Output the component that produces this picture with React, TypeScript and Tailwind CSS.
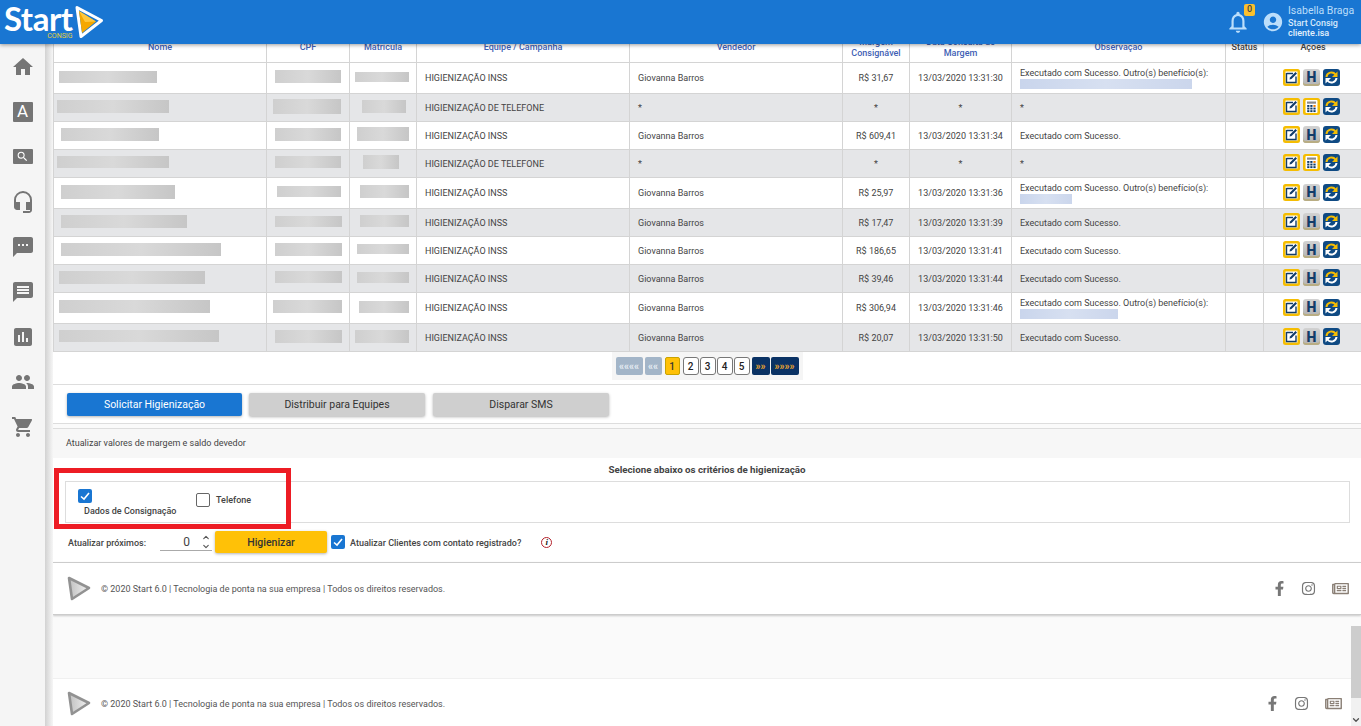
import { ChevronDown, ChevronUp } from 'lucide-react'
import { FaFacebookF, FaInstagram, FaRegNewspaper } from 'react-icons/fa'
import {
  MdAccountCircle,
  MdAssessment,
  MdHeadsetMic,
  MdHome,
  MdMessage,
  MdNotificationsNone,
  MdPeople,
  MdSearch,
  MdShoppingCart,
  MdSms,
} from 'react-icons/md'

const columns = 'grid grid-cols-[213px_83px_67px_213px_213px_67px_102px_214px_38px_98px]'

// blurred cells: [left offset in the cell, width, height]
type Blur = [number, number, number]

type Row = {
  name: Blur
  cpf: Blur
  mat: Blur
  team: string
  seller: string
  margin: string
  date: string
  note: string
  extra?: number
  tall?: boolean
  calc?: boolean
}

const ok = 'Executado com Sucesso.'
const more = 'Executado com Sucesso. Outro(s) benefício(s):'
const inss = 'HIGIENIZAÇÃO INSS'
const tel = 'HIGIENIZAÇÃO DE TELEFONE'
const seller = 'Giovanna Barros'

const rows: Row[] = [
  { name: [6, 98, 12], cpf: [9, 66, 13], mat: [6, 54, 10], team: inss, seller, margin: 'R$ 31,67', date: '13/03/2020 13:31:30', note: more, extra: 172, tall: true },
  { name: [4, 112, 13], cpf: [7, 68, 15], mat: [13, 44, 13], team: tel, seller: '*', margin: '*', date: '*', note: '*', calc: true },
  { name: [8, 98, 13], cpf: [9, 66, 13], mat: [8, 52, 14], team: inss, seller, margin: 'R$ 609,41', date: '13/03/2020 13:31:34', note: ok },
  { name: [4, 112, 12], cpf: [9, 66, 12], mat: [14, 36, 14], team: tel, seller: '*', margin: '*', date: '*', note: '*', calc: true },
  { name: [8, 114, 14], cpf: [11, 64, 11], mat: [11, 49, 13], team: inss, seller, margin: 'R$ 25,97', date: '13/03/2020 13:31:36', note: more, extra: 52, tall: true },
  { name: [8, 126, 13], cpf: [9, 67, 11], mat: [11, 49, 12], team: inss, seller, margin: 'R$ 17,47', date: '13/03/2020 13:31:39', note: ok },
  { name: [8, 160, 13], cpf: [9, 67, 13], mat: [8, 52, 10], team: inss, seller, margin: 'R$ 186,65', date: '13/03/2020 13:31:41', note: ok },
  { name: [6, 146, 13], cpf: [9, 67, 12], mat: [8, 52, 11], team: inss, seller, margin: 'R$ 39,46', date: '13/03/2020 13:31:44', note: ok },
  { name: [6, 151, 13], cpf: [7, 69, 13], mat: [10, 50, 12], team: inss, seller, margin: 'R$ 306,94', date: '13/03/2020 13:31:46', note: more, extra: 98, tall: true },
  { name: [6, 160, 12], cpf: [9, 67, 13], mat: [6, 54, 13], team: inss, seller, margin: 'R$ 20,07', date: '13/03/2020 13:31:50', note: ok },
]

function HeaderLogo() {
  return (
    <svg viewBox="0 0 31 34" className="h-[34px] w-[31px]">
      <path d="M4 2.5 L28.5 15.5 L8 31.5 Z" fill="none" stroke="#fff" strokeWidth="3" strokeLinejoin="round" />
      <path d="M6 6 L23 16.5 L9 28 Z" fill="#f5a800" />
      <path d="M6 6 L23 16.5 L12 17 Z" fill="#ffc83d" />
    </svg>
  )
}

function FooterLogo() {
  return (
    <svg viewBox="0 0 26 27" className="h-[27px] w-[26px]">
      <defs>
        <linearGradient id="footerPlay" x1="0" x2="1" y1="0" y2="0">
          <stop offset="0" stopColor="#c0c0c0" />
          <stop offset="1" stopColor="#f2f2f2" />
        </linearGradient>
      </defs>
      <path d="M3 3 L23 13 L6 24 Z" fill="url(#footerPlay)" stroke="#929292" strokeWidth="2.6" strokeLinejoin="round" />
    </svg>
  )
}

function Check() {
  return (
    <span className="flex h-[14px] w-[14px] shrink-0 items-center justify-center rounded-[2px] bg-[#1976d2]">
      <svg viewBox="0 0 14 14" className="h-[14px] w-[14px]">
        <path d="M3 7.5 L6 10 L11 4" fill="none" stroke="#fff" strokeWidth="1.6" />
      </svg>
    </span>
  )
}

function EditTile() {
  return (
    <svg viewBox="0 0 17 17" className="h-[17px] w-[17px]">
      <rect width="17" height="17" rx="2.5" fill="#f5bd02" />
      <rect x="2.5" y="2.5" width="12" height="12" fill="#fff" />
      <path d="M3.5 4.5 H10 M3.5 4 V13.5 H13 V7.5" fill="none" stroke="#123c69" strokeWidth="1.4" />
      <path d="M6.5 10.5 L7 8.5 L12.5 3 L14 4.5 L8.5 10 Z" fill="#123c69" />
    </svg>
  )
}

function HTile() {
  return (
    <span className="flex h-[17px] w-[17px] items-center justify-center rounded-[3px] bg-gradient-to-b from-[#d2d2d2] to-[#b4b4b4] text-[14px] leading-none font-black text-[#123c69] shadow-[inset_0_-2px_0_#b9ad83]">
      H
    </span>
  )
}

function CalcTile() {
  const cells = [0, 1, 2, 3, 4, 5, 6, 7, 8]
  return (
    <svg viewBox="0 0 17 17" className="h-[17px] w-[17px]">
      <rect width="17" height="17" rx="2.5" fill="#f5bd02" />
      <rect x="2.5" y="2" width="12" height="13" rx="1" fill="#fff" />
      <rect x="4" y="3.5" width="9" height="2.2" fill="#8b8b8b" />
      {cells.map((c) => (
        <rect
          key={c}
          x={4.2 + (c % 3) * 3.1}
          y={7 + Math.floor(c / 3) * 2.6}
          width="2.2"
          height="1.9"
          fill={c === 2 ? '#ef7d00' : '#123c69'}
        />
      ))}
    </svg>
  )
}

function SyncTile() {
  return (
    <svg viewBox="0 0 17 17" className="h-[17px] w-[17px]">
      <rect width="17" height="17" rx="3" fill="#0f4a83" />
      <path d="M3.5 8 A5 5 0 0 1 12.5 5.5" fill="none" stroke="#f5bd02" strokeWidth="2" />
      <path d="M14.5 2.5 V8 H9 Z" fill="#f5bd02" />
      <path d="M13.5 9 A5 5 0 0 1 4.5 11.5" fill="none" stroke="#fff" strokeWidth="2" />
      <path d="M2.5 14.5 V9 H8 Z" fill="#fff" />
    </svg>
  )
}

function Masked({ box }: { box: Blur }) {
  return (
    <div
      className="mb-[3px] bg-gradient-to-r from-[#cfcfcf] via-[#d9d9d9] to-[#c6c6c6] blur-[0.5px]"
      style={{ marginLeft: box[0] - 1, width: box[1], height: box[2] }}
    />
  )
}

function Footer({ right }: { right: string }) {
  return (
    <div className={`flex flex-1 items-center justify-between pl-[13px] ${right}`}>
      <div className="flex items-center gap-[9px]">
        <FooterLogo />
        <span className="pt-[3px] text-[9px] text-[#555]">
          © 2020 Start 6.0 | Tecnologia de ponta na sua empresa | Todos os direitos reservados.
        </span>
      </div>
      <div className="flex items-center text-[#777]">
        <FaFacebookF className="h-[15px] w-[15px]" />
        <FaInstagram className="ml-[14px] h-[15px] w-[15px]" />
        <FaRegNewspaper className="ml-[15px] h-[15px] w-[19px] text-[#8a7f75]" />
      </div>
    </div>
  )
}

const sideIcons = [MdHeadsetMic, MdSms, MdMessage, MdAssessment, MdPeople, MdShoppingCart]

export default function App() {
  return (
    <div className="relative flex h-screen w-screen flex-col overflow-hidden bg-[#fafafa] font-['Roboto',sans-serif] text-[9px] text-[#444]">
      {/* top bar */}
      <header className="relative z-10 flex h-[44px] shrink-0 items-center justify-between bg-[#1976d2] pr-[7px] pl-[4px] shadow-[0_1px_4px_rgba(0,0,0,0.4)]">
        <div className="flex h-full items-start">
          <div className="flex h-full flex-col pt-[3px]">
            <span className="font-['Lato',sans-serif] text-[33px] leading-[30px] font-bold tracking-[-0.5px] whitespace-nowrap text-white">
              Start
            </span>
            <span className="self-end text-[7px] leading-[7px] text-[#e8cf3a]">CONSIG</span>
          </div>
          <div className="mt-[5px] ml-[1px]">
            <HeaderLogo />
          </div>
        </div>
        <div className="flex items-center text-[#bbdefb]">
          <div className="relative">
            <MdNotificationsNone className="h-[26px] w-[26px]" />
            <span className="absolute -top-[5px] right-[-4px] flex h-[12px] w-[11px] items-center justify-center rounded-[2px] bg-[#fbc02d] text-[9px] font-medium text-[#444]">
              0
            </span>
          </div>
          <MdAccountCircle className="ml-[11px] h-[22px] w-[22px]" />
          <div className="ml-[4px] w-[66px] leading-[11px]">
            <p className="text-[10.5px] whitespace-nowrap">Isabella Braga</p>
            <p className="mt-[2px] text-[9px] font-medium whitespace-nowrap text-[#d6e9fb]">Start Consig</p>
            <p className="mt-[-1px] text-[9px] font-medium whitespace-nowrap text-[#e3f0fc]">cliente.isa</p>
          </div>
        </div>
      </header>

      <div className="flex min-h-0 flex-1">
        {/* side menu */}
        <nav className="flex w-[45px] shrink-0 flex-col items-center bg-[#f5f5f5] text-[#757575]">
          <div className="flex h-[45px] items-center">
            <MdHome className="h-[24px] w-[24px]" />
          </div>
          <div className="flex h-[45px] items-center">
            <span className="flex h-[20px] w-[20px] items-center justify-center rounded-[1px] bg-[#757575] text-[17px] leading-none text-white">
              A
            </span>
          </div>
          <div className="flex h-[45px] items-center">
            <span className="flex h-[15px] w-[20px] items-center justify-center rounded-[1px] bg-[#757575] text-white">
              <MdSearch className="h-[13px] w-[13px]" />
            </span>
          </div>
          {sideIcons.map((Icon, i) => (
            <div key={i} className="flex h-[45px] items-center">
              <Icon className="h-[24px] w-[24px]" />
            </div>
          ))}
        </nav>
        <div className="w-[8px] shrink-0 bg-gradient-to-r from-[#d2d2d2] to-[#f6f6f6]" />

        <main className="relative -mt-[12px] min-w-0 flex-1 overflow-hidden">
          {/* table */}
          <div className="border-l border-[#d4d4d4] bg-white">
            <div className={`${columns} h-[31px] items-center border-b border-[#d4d4d4] text-center leading-[11px] font-medium text-[#3f5fb5]`}>
              <div className="flex h-full items-center justify-center border-r border-[#d4d4d4]">Nome</div>
              <div className="flex h-full items-center justify-center border-r border-[#d4d4d4]">CPF</div>
              <div className="flex h-full items-center justify-center border-r border-[#d4d4d4]">Matrícula</div>
              <div className="flex h-full items-center justify-center border-r border-[#d4d4d4]">Equipe / Campanha</div>
              <div className="flex h-full items-center justify-center border-r border-[#d4d4d4]">Vendedor</div>
              <div className="flex h-full items-center justify-center border-r border-[#d4d4d4] pt-[2px]">Margem Consignável</div>
              <div className="flex h-full items-center justify-center border-r border-[#d4d4d4] px-[14px] pt-[2px]">Data Consulta de Margem</div>
              <div className="flex h-full items-center justify-center border-r border-[#d4d4d4]">Observação</div>
              <div className="flex h-full items-center justify-center border-r border-[#d4d4d4] text-[#444]">Status</div>
              <div className="flex h-full items-center justify-center text-[#444]">Ações</div>
            </div>
            {rows.map((row, i) => {
              const nudge = row.tall ? 'pt-[1px]' : 'pt-[2px]'
              return (
                <div
                  key={i}
                  className={`${columns} border-b border-[#d4d4d4] ${row.tall ? 'h-[31px]' : 'h-[28px]'} ${i % 2 ? 'bg-[#e5e6e8]' : 'bg-white'}`}
                >
                  <div className="flex items-center border-r border-[#d4d4d4]">
                    <Masked box={row.name} />
                  </div>
                  <div className="flex items-center border-r border-[#d4d4d4]">
                    <Masked box={row.cpf} />
                  </div>
                  <div className="flex items-center border-r border-[#d4d4d4]">
                    <Masked box={row.mat} />
                  </div>
                  <div className={`flex items-center border-r border-[#d4d4d4] pl-[8px] ${nudge}`}>{row.team}</div>
                  <div className={`flex items-center border-r border-[#d4d4d4] pl-[8px] ${nudge}`}>{row.seller}</div>
                  <div className={`flex items-center justify-center border-r border-[#d4d4d4] ${nudge}`}>{row.margin}</div>
                  <div className={`flex items-center justify-center border-r border-[#d4d4d4] ${nudge}`}>{row.date}</div>
                  <div className="flex flex-col justify-center border-r border-[#d4d4d4] pt-[1px] pl-[8px]">
                    <span className="leading-[11px]">{row.note}</span>
                    {row.extra ? (
                      <span
                        className="h-[10px] bg-gradient-to-r from-[#c9d5ec] via-[#d7e0f1] to-[#cbd6ec] blur-[0.5px]"
                        style={{ width: row.extra }}
                      />
                    ) : null}
                  </div>
                  <div className="border-r border-[#d4d4d4]" />
                  <div className="flex items-center justify-center gap-[3px] pr-[3px] pb-[2px]">
                    <EditTile />
                    {row.calc ? <CalcTile /> : <HTile />}
                    <SyncTile />
                  </div>
                </div>
              )
            })}
          </div>

          {/* pagination */}
          <div className="flex h-[32px] items-start justify-center bg-white">
            <div className="flex h-[28px] items-start bg-[#f5f5f5] px-[4px] pt-[5px] text-[10px] font-bold">
              <span className="flex h-[18px] w-[27px] items-center justify-center rounded-[2px] bg-[#a3b5c8] text-[#e8eef4]">««««</span>
              <span className="ml-[2px] flex h-[18px] w-[17px] items-center justify-center rounded-[2px] bg-[#a3b5c8] text-[#e8eef4]">««</span>
              <span className="mr-[2px] ml-[3px] flex h-[18px] w-[15px] items-center justify-center rounded-[2px] border border-[#c9a300] bg-[#ffc107] font-medium text-[#333]">1</span>
              {[2, 3, 4, 5].map((n) => (
                <span
                  key={n}
                  className="ml-[1px] flex h-[18px] w-[16px] items-center justify-center rounded-[3px] border border-[#777] bg-white font-medium text-[#222]"
                >
                  {n}
                </span>
              ))}
              <span className="ml-[2px] flex h-[18px] w-[18px] items-center justify-center rounded-[2px] bg-[#0a3264] text-[#f0a92c]">»»</span>
              <span className="ml-[1px] flex h-[18px] w-[28px] items-center justify-center rounded-[2px] bg-[#0a3264] text-[#f0a92c]">»»»»</span>
            </div>
          </div>

          {/* actions */}
          <div className="flex h-[40px] items-center gap-[7px] border-y border-[#ddd] bg-white pl-[14px]">
            <button className="h-[23px] w-[175px] rounded-[2px] bg-[#1976d2] pt-[1px] text-[10.5px] text-white shadow-[0_1px_3px_rgba(0,0,0,0.3)]">
              Solicitar Higienização
            </button>
            <button className="h-[23px] w-[176px] rounded-[2px] bg-[#cfcfcf] pt-[1px] text-[10.5px] text-[#333] shadow-[0_1px_3px_rgba(0,0,0,0.3)]">
              Distribuir para Equipes
            </button>
            <button className="ml-[1px] h-[23px] w-[176px] rounded-[2px] bg-[#cfcfcf] pt-[1px] text-[10.5px] text-[#333] shadow-[0_1px_3px_rgba(0,0,0,0.3)]">
              Disparar SMS
            </button>
          </div>

          <div className="mt-[4px] flex h-[30px] items-center border-t border-[#ddd] bg-[#f7f7f7] pt-[1px] pl-[13px] text-[#444]">
            Atualizar valores de margem e saldo devedor
          </div>

          {/* criteria */}
          <section className="bg-white">
            <h3 className="flex h-[23px] items-center justify-center pt-[2px] text-[9.75px] font-bold text-[#444]">
              Selecione abaixo os critérios de higienização
            </h3>
            <div className="mr-[11px] ml-[12px] flex h-[42px] border border-[#ddd] pt-[7px] pl-[12px]">
              <div className="w-[118px]">
                <Check />
                <p className="mt-[2px] ml-[6px] font-medium text-[#444]">Dados de Consignação</p>
              </div>
              <div className="mt-[4px] flex h-[14px] items-center gap-[6px]">
                <span className="h-[14px] w-[14px] rounded-[2px] border border-[#666] bg-white" />
                <span className="pt-[1px] font-medium text-[#444]">Telefone</span>
              </div>
            </div>
            <div className="flex h-[39px] items-start pt-[8px] pl-[15px] font-medium">
              <span className="mt-[6px] w-[92px]">Atualizar próximos:</span>
              <div className="flex h-[20px] w-[52px] items-center justify-end border-b border-[#aaa] pt-[2px] text-[12px] font-normal">
                <span className="mr-[2px]">0</span>
                <span className="ml-[8px] flex w-[12px] flex-col text-[#555]">
                  <ChevronUp className="h-[9px] w-[12px]" strokeWidth={3} />
                  <ChevronDown className="h-[9px] w-[12px]" strokeWidth={3} />
                </span>
              </div>
              <button className="ml-[3px] h-[22px] w-[112px] rounded-[2px] bg-[#ffc107] pt-[1px] text-[10.5px] text-[#333] shadow-[0_1px_3px_rgba(0,0,0,0.3)]">
                Higienizar
              </button>
              <span className="mt-[4px] ml-[4px]">
                <Check />
              </span>
              <span className="mt-[6px] ml-[5px]">Atualizar Clientes com contato registrado?</span>
              <span className="mt-[6px] ml-[20px] flex h-[11px] w-[11px] items-center justify-center rounded-full border border-[#b3202a] font-['Liberation_Serif',serif] text-[9px] leading-none font-bold text-[#222] italic">
                i
              </span>
            </div>
            <div className="flex h-[53px] flex-col border-y border-[#ccc] bg-white shadow-[0_1px_2px_rgba(0,0,0,0.2)]">
              <Footer right="pr-[11px]" />
            </div>
          </section>
          <div className="h-[63px]" />
          <div className="flex h-[48px] flex-col border-t border-[#f0f0f0] bg-white pt-[2px]">
            <Footer right="pr-[18px]" />
          </div>

          {/* annotation drawn on the screenshot */}
          <div className="pointer-events-none absolute top-[436px] left-[1px] h-[61px] w-[237px] border-[5px] border-[#ed1c24]" />
        </main>
      </div>

      {/* page scrollbar */}
      <div className="absolute top-[626px] right-0 flex h-[100px] w-[10px] flex-col bg-[#f1f1f1]">
        <div className="h-[72px] bg-[#cdcdcd]" />
        <ChevronDown className="mt-auto mb-[1px] h-[10px] w-[10px] text-[#505050]" strokeWidth={3} />
      </div>
    </div>
  )
}
